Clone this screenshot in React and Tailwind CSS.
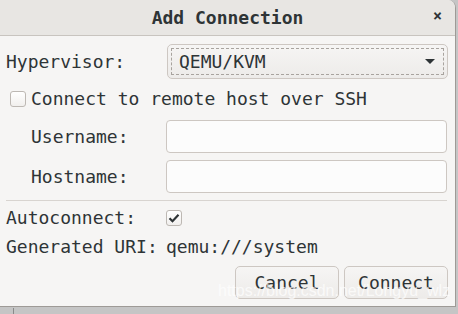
import React from 'react';

// Add Connection dialog (virt-manager style, Adwaita look)

function Check({ checked }) {
  return (
    <span className="flex h-[16px] w-[16px] shrink-0 items-center justify-center rounded-[3px] border border-[#bdb8b3] bg-gradient-to-b from-[#ffffff] to-[#f1efed]">
      {checked && (
        <svg width="12" height="10" viewBox="0 0 12 10">
          <path d="M1.5 5.2 L4.5 8.2 L10.5 1.8" fill="none" stroke="#2e3436" strokeWidth="2.2" />
        </svg>
      )}
    </span>
  );
}

function Entry() {
  return <div className="h-[33px] w-[281px] rounded-[4px] border border-[#cdc7c2] bg-[#fcfcfc]" />;
}

export default function App() {
  return (
    <div className="relative h-[314px] w-[458px] overflow-hidden bg-[#c5c5c5] font-['DejaVu_Sans_Mono',monospace] text-[18px] text-[#2e3436]">
      <div className="h-[307px] w-[456px] overflow-hidden rounded-tr-[8px] border-r border-b border-[#9e9a96] bg-[#f6f5f4]">
        <div className="relative flex h-[36px] items-center justify-center border-b border-[#c8c4bf] bg-[#e8e6e3]">
          <span className="font-bold leading-none">Add Connection</span>
          <span className="absolute right-[13px] top-[9px] text-[15px] font-bold leading-none">×</span>
        </div>

        <div className="flex flex-col pl-[6px] pr-[7px] pt-[8px]">
          <div className="flex h-[35px] items-center">
            <span className="w-[161px] leading-none">Hypervisor:</span>
            <div className="flex h-[35px] w-[281px] items-center rounded-[5px] border border-[#cdc7c2] bg-gradient-to-b from-[#f6f5f4] to-[#edebe9] p-[3px]">
              <div className="flex h-full w-full items-center justify-between border border-dashed border-[#a8a39e] pl-[7px] pr-[8px]">
                <span className="leading-none">QEMU/KVM</span>
                <svg width="10" height="6" viewBox="0 0 10 6">
                  <path d="M0 0 L10 0 L5 5 Z" fill="#2e3436" />
                </svg>
              </div>
            </div>
          </div>

          <div className="mt-[7px] flex h-[26px] items-center pl-[4px]">
            <Check />
            <span className="ml-[5px] leading-none">Connect to remote host over SSH</span>
          </div>

          <div className="mt-[8px] flex items-center">
            <span className="w-[160px] pl-[25px] leading-none">Username:</span>
            <Entry />
          </div>
          <div className="mt-[7px] flex items-center">
            <span className="w-[160px] pl-[25px] leading-none">Hostname:</span>
            <Entry />
          </div>

          <div className="mt-[7px] h-px w-[441px] bg-[#d8d4d0]" />

          <div className="mt-[7px] flex h-[20px] items-center">
            <span className="w-[160px] leading-none">Autoconnect:</span>
            <Check checked />
          </div>

          <div className="mt-[8px] flex h-[22px] items-center">
            <span className="w-[160px] leading-none">Generated URI:</span>
            <span className="leading-none">qemu:///system</span>
          </div>

          <div className="mt-[8px] flex justify-end gap-[5px]">
            <button className="flex h-[33px] w-[104px] items-center justify-center rounded-[5px] border border-[#cdc7c2] bg-gradient-to-b from-[#f6f5f4] to-[#edebe9] leading-none">
              Cancel
            </button>
            <button className="flex h-[33px] w-[104px] items-center justify-center rounded-[5px] border border-[#cdc7c2] bg-gradient-to-b from-[#f6f5f4] to-[#edebe9] leading-none">
              Connect
            </button>
          </div>
        </div>
      </div>

      <span className="absolute left-[218px] top-[283px] font-['Liberation_Sans',sans-serif] text-[16px] leading-none text-[#ffffff]/70">
        https://blog.csdn.net/Longyu_wlz
      </span>
      <div className="absolute left-[13px] top-[308px] h-[6px] w-px bg-[#8a8a8a]" />
    </div>
  );
}
